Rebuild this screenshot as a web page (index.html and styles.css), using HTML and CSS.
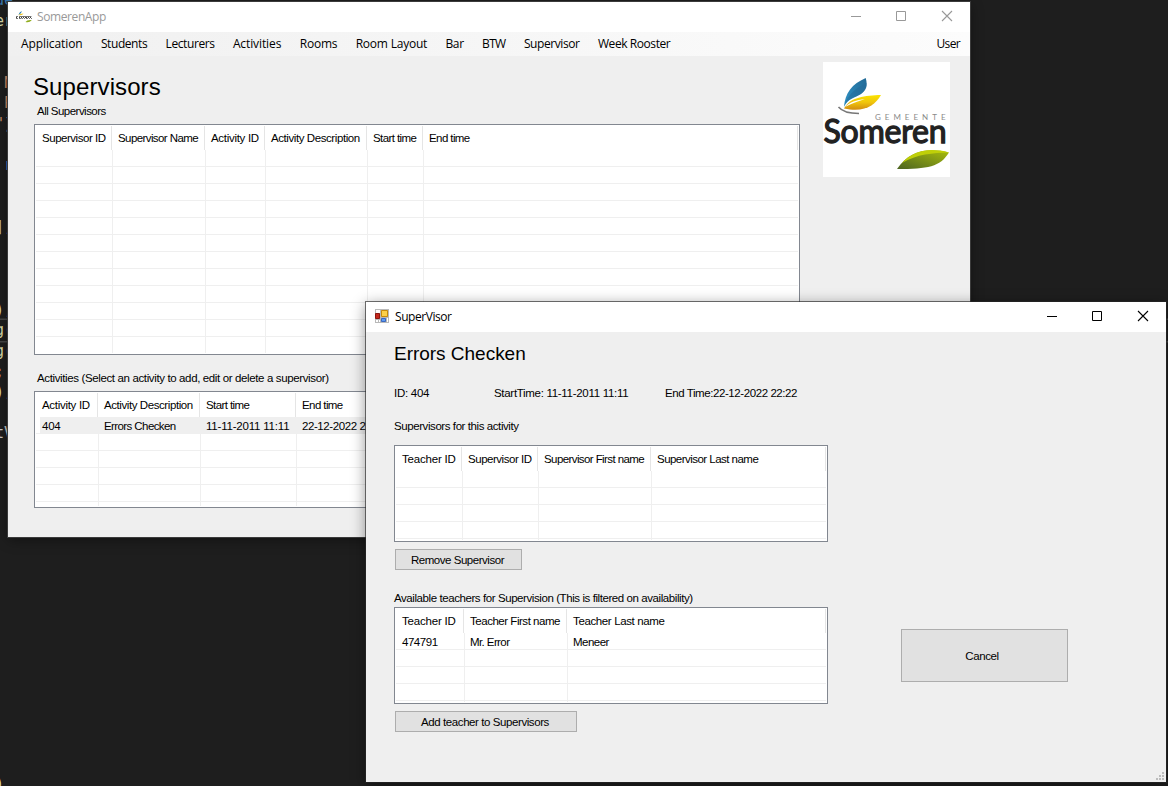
FILE: index.html
```html
<!DOCTYPE html>
<html lang="en">
<head>
<meta charset="utf-8">
<title>SomerenApp</title>
<link rel="stylesheet" href="styles.css">
</head>
<body>
<div class="desktop">
  <div class="code" aria-hidden="true">
    <div class="blue">ue</div><div class="sand">er</div><div></div><div></div>
    <div class="orange">&nbsp;N</div><div class="orange">&nbsp;P</div><div><span class="orange">"</span>)</div><div></div>
    <div class="sky">&nbsp;r</div><div></div><div></div><div>]<span class="sky">;</span></div>
    <div></div><div></div><div></div><div><span class="sand">)</span><span class="sky">;</span></div>
    <div class="current"><span class="sand">g</span><span class="sky">(</span></div><div><span class="sand">g</span><span class="sky">(</span></div>
    <div class="orange">;</div><div><span class="sand">)</span><span class="sky">;</span></div><div></div>
    <div>tV</div><div></div><div></div><div></div><div></div><div></div><div></div><div></div><div></div><div></div><div></div><div></div><div></div><div></div><div></div><div></div><div></div>
    <div class="sand">)</div>
  </div>

  <section class="window main-window">
    <header class="titlebar inactive">
      <svg class="app-icon" width="16" height="16" viewBox="0 0 16 16">
        <path d="M2.500 6Q3 3.500 5.500 2Q6 4 2.500 6Z" fill="#2a82b5"/>
        <path d="M2.500 6Q4 4.500 7.500 4.500Q6 7 2.500 6Z" fill="#efc313"/>
        <path d="M0 7.500h2M3 7.500h12.500M0 9.500h2M3 9.500h2.500M6 9.500h1M8 9.500h1M10 9.500h2M13 9.500h1M15 9.500h1" stroke="#777" stroke-width="1"/>
        <path d="M0 8.500h1M3 8.500h1M5 8.500h1M7 8.500h1M9 8.500h2M12 8.500h1M14 8.500h1" stroke="#444" stroke-width="1"/>
        <path d="M9.500 13Q11 10.500 15.800 11Q13.500 14 9.500 13Z" fill="#8fac1c"/>
      </svg>
      <span class="caption w-somerenapp">SomerenApp</span>
      <div class="controls">
        <svg width="46" height="30"><path d="M19 14.500h10"/></svg>
        <svg width="46" height="30"><path d="M18.500 9.500h9v9h-9z"/></svg>
        <svg width="46" height="30"><path class="cross" d="M18 9l10 10M28 9l-10 10"/></svg>
      </div>
    </header>
    <nav class="menu">
      <span class="k1">Application</span><span class="k4">Students</span><span class="k4">Lecturers</span><span class="k1">Activities</span><span class="k2">Rooms</span><span class="k2">Room Layout</span><span class="k5">Bar</span><span class="k6">BTW</span><span class="k4">Supervisor</span><span class="k4">Week Rooster</span><span class="k6 user">User</span>
    </nav>
    <div class="main-body">
      <div class="main-column">
        <h1>Supervisors</h1>
        <div class="label first-label t50">All Supervisors</div>
        <div class="list all-supervisors">
          <div class="head"><span class="t45">Supervisor ID</span><span class="t55">Supervisor Name</span><span class="t30">Activity ID</span><span class="t40">Activity Description</span><span class="t55">Start time</span><span class="t55">End time</span></div>
          <div class="rows"><i></i><i></i><i></i><i></i><i></i></div>
        </div>
        <div class="label second-label t35">Activities (Select an activity to add, edit or delete a supervisor)</div>
        <div class="list activities">
          <div class="head"><span class="t30">Activity ID</span><span class="t40">Activity Description</span><span class="t55">Start time</span><span class="t55">End time</span></div>
          <div class="rows"><i></i><i></i><i></i>
            <div class="item selected"><span class="t25">404</span><span class="t55">Errors Checken</span><span class="t15">11-11-2011 11:11</span><span class="t40">22-12-2022 22:22</span></div>
          </div>
        </div>
      </div>
      <svg class="logo" width="127" height="115" viewBox="0 0 127 115">
        <defs>
          <linearGradient id="blue" x1="0" y1="1" x2="1" y2="0"><stop offset="0" stop-color="#3095c8"/><stop offset="1" stop-color="#226995"/></linearGradient>
          <linearGradient id="yellow" x1="0" y1="0" x2="0" y2="1"><stop offset="0" stop-color="#fbe400"/><stop offset=".5" stop-color="#f0c40c"/><stop offset="1" stop-color="#d18b10"/></linearGradient>
          <linearGradient id="green" x1="0" y1="1" x2="1" y2="0"><stop offset="0" stop-color="#4c6422"/><stop offset="1" stop-color="#a9bd0b"/></linearGradient>
        </defs>
        <path d="M21 45C22 31 29 22 42.700 16C45 24 43 28 38 32C32 36 25 36 21 45Z" fill="url(#blue)"/>
        <path d="M21 44C25 32 33 26 43.500 21C44.500 27 40 31 36 33C30 36 25 37 21 44Z" fill="#246a98" opacity=".55"/>
        <path d="M21 46.500C27 35 42 33.500 58 33C52 43 42 51 21 46.500Z" fill="url(#yellow)"/>
        <path d="M22 45C27 40 33 38 42 37C35 39.500 29 41 22 45Z" fill="#fff"/>
        <path d="M15.500 45C20 50.500 28 51.500 36 51.500" fill="none" stroke="#777" stroke-width="1.500"/>
        <text x="52" y="57.700" textLength="70.500" class="logo-small">GEMEENTE</text>
        <text x="0.500" y="80.500" textLength="123" class="logo-name">Someren</text>
        <path d="M74 107C86 89 104 85 126 90.500C117 105 105 107 74 107Z" fill="url(#green)"/>
        <path d="M79 101C91 88 107 85.500 126 90.500C110 91 94 92 79 101Z" fill="#bfcf08"/>
      </svg>
    </div>
  </section>

  <section class="window dialog">
    <header class="titlebar">
      <svg class="form-icon" width="14" height="14" viewBox="0 0 14 14">
        <path d="M0 0h14v14H0z" fill="#b9b9b9"/>
        <path d="M1 1h4v3H1zM1 11h2v2H1zM4 11h1v2H4zM12 9h1v4h-1z" fill="#fff"/>
        <path d="M.5 4.500h4v5h-4z" fill="#c5281c" stroke="#8e1710"/>
        <path d="M6.500 1.500h6v6h-6z" fill="#fbd04a" stroke="#c78a09"/>
        <path d="M6.500 9.500h4v3h-4z" fill="#5b9af5" stroke="#3a68c0"/>
      </svg>
      <span class="caption w-supervisor">SuperVisor</span>
      <div class="controls">
        <svg width="46" height="30"><path d="M19 14.500h10"/></svg>
        <svg width="46" height="30"><path d="M18.500 9.500h9v9h-9z"/></svg>
        <svg width="46" height="30"><path class="cross" d="M18 9l10 10M28 9l-10 10"/></svg>
      </div>
    </header>
    <div class="dialog-body">
      <div class="dialog-column">
        <h2>Errors Checken</h2>
        <div class="info"><span class="t25">ID: 404</span><span class="t30">StartTime: 11-11-2011 11:11</span><span class="t40">End Time:22-12-2022 22:22</span></div>
        <div class="assigned-label t40">Supervisors for this activity</div>
        <div class="list assigned">
          <div class="head"><span class="t15">Teacher ID</span><span class="t45">Supervisor ID</span><span class="t55">Supervisor First name</span><span class="t50">Supervisor Last name</span></div>
          <div class="rows"><i></i><i></i><i></i></div>
        </div>
        <button class="remove t45">Remove Supervisor</button>
        <div class="available-label t40">Available teachers for Supervision (This is filtered on availability)</div>
        <div class="list available">
          <div class="head"><span class="t15">Teacher ID</span><span class="t45">Teacher First name</span><span class="t35">Teacher Last name</span></div>
          <div class="rows"><i></i><i></i>
            <div class="item"><span class="t45">474791</span><span class="t55">Mr. Error</span><span class="t50">Meneer</span></div>
          </div>
        </div>
        <button class="add t40">Add teacher to Supervisors</button>
      </div>
      <button class="cancel t40">Cancel</button>
    </div>
    <svg class="grip" width="8" height="8" fill="#bcbcbc"><path d="M6 0h2v2H6zM3 3h2v2H3zM6 3h2v2H6zM0 6h2v2H0zM3 6h2v2H3zM6 6h2v2H6z"/></svg>
  </section>
</div>
</body>
</html>
```
FILE: styles.css
```css
* { box-sizing: border-box; }
body { margin: 0; }
.desktop {
  position: relative;
  width: 1168px;
  height: 786px;
  overflow: hidden;
  background: #1e1e1e;
  color: #000;
  font: 11.5px/14px "Liberation Sans", Arial, sans-serif;
  white-space: nowrap;
}

/* editor behind the windows */
.code {
  margin-top: -10px;
  color: #c8c8c8;
  font: 15px/20.65px "DejaVu Sans Mono", monospace;
  text-indent: -5px;
}
.code div { height: 20.65px; }
.code .current { box-shadow: 0 0 0 1.5px #464646; }
.blue { color: #3a76ad; }
.sand { color: #d7d7a8; }
.orange { color: #c98766; }
.sky { color: #7fb4dc; }

.window {
  position: absolute;
  display: flex;
  flex-direction: column;
  background: #efefef;
}
.main-window {
  left: 8px;
  top: 2px;
  width: 962px;
  height: 535px;
  box-shadow: 0 0 0 1px #3b3b3b, 0 3px 12px rgba(0, 0, 0, .4);
}
.dialog {
  left: 366px;
  top: 302px;
  width: 800px;
  height: 480px;
  box-shadow: 0 0 0 1px rgba(40, 40, 40, .65), 0 3px 14px rgba(0, 0, 0, .45);
}

.titlebar {
  display: flex;
  align-items: center;
  height: 30px;
  background: #fff;
  font: 12px/16px "Open Sans", "Noto Sans", sans-serif;
}
.inactive { color: #999; }
.app-icon { margin: 0 5px 0 8px; }
.form-icon { margin: 0 6px 3px 9px; }
.w-somerenapp { letter-spacing: -.4px; }
.w-supervisor { letter-spacing: -.45px; }
.controls {
  display: flex;
  margin-left: auto;
  fill: none;
  stroke: #000;
}
.inactive .controls { stroke: #999; }
.cross { stroke-width: 1.1; }

.menu {
  display: flex;
  gap: 18.4px;
  height: 24px;
  padding: 0 10px 0 13px;
  background: linear-gradient(90deg, #f0f0f0, #fcfcfc);
  font: 12px/24px "Open Sans", "Noto Sans", sans-serif;
}
.user { margin-left: auto; }
.k1 { letter-spacing: -.1px; }
.k2 { letter-spacing: -.22px; }
.k4 { letter-spacing: -.42px; }
.k5 { letter-spacing: -.4px; }
.k6 { letter-spacing: -.65px; }

.main-body {
  display: flex;
  padding-left: 26px;
}
.main-column { width: 766px; padding-top: 17px; }
h1 {
  margin: 0 0 3px -1px;
  font-size: 24px;
  font-weight: 400;
  line-height: 28px;
  letter-spacing: .1px;
}
.label { padding-left: 3px; margin-bottom: 6px; }
.second-label { margin-top: 16px; }
.logo { margin: 6px 0 0 23px; background: #fff; }
.logo-small { font: 8px Lato, sans-serif; fill: #8a8a8a; }
.logo-name {
  font: 400 32px Lato, sans-serif;
  fill: #222;
  stroke: #222;
  stroke-width: 1.3px;
}

/* report list with grid lines */
.list {
  display: flex;
  flex-direction: column;
  padding: 1px;
  border: 1px solid #828790;
  background: #fff;
}
.head {
  display: grid;
  grid-template-columns: var(--cols);
  height: 24px;
}
.head span {
  padding: 5px 0 0 6px;
  border-right: 1px solid #e5e5e5;
}
.rows {
  position: relative;
  flex: 1;
  display: grid;
  grid-template-columns: var(--cols);
  padding-left: 1px;
  background: repeating-linear-gradient(#fff 0 16px, #efefef 16px 17px);
}
.rows i { border-right: 1px solid #efefef; }
.item {
  position: absolute;
  inset: 0 0 auto 4px;
  display: grid;
  grid-template-columns: var(--cols);
  height: 16px;
}
.item span { padding: 2px 0 0 2px; }
.selected { height: 17px; background: #efefef; }
.all-supervisors { --cols: 76px 93px 60px 102px 56px 1fr; height: 231px; }
.activities { --cols: 62px 102px 96px 1fr; height: 117px; }
.assigned { --cols: 66px 76px 113px 1fr; height: 97px; }
.available { --cols: 68px 103px 1fr; height: 97px; }

.dialog-body { display: flex; padding: 11px 0 0 28px; }
.dialog-column { width: 434px; }
h2 {
  margin: 0 0 21px;
  font-size: 19px;
  font-weight: 400;
  line-height: 22px;
  letter-spacing: -.02px;
}
.info {
  display: grid;
  grid-template-columns: 100px 171px 1fr;
  margin-bottom: 19px;
}
.assigned-label { margin-bottom: 12px; }
.available-label { margin: 21px 0 2px; }
button {
  display: block;
  padding: 0 2px 0 0;
  border: 1px solid #adadad;
  border-radius: 0;
  background: #e1e1e1;
  color: #000;
  font: inherit;
}
.remove { width: 127px; height: 21px; margin: 7px 0 0 1px; }
.add { width: 182px; height: 21px; margin: 7px 0 0 1px; }
.cancel { width: 167px; height: 53px; margin: 286px 0 0 73px; padding-right: 5px; }
.grip { position: absolute; right: 2px; bottom: 2px; }

/* per-string tracking */
.t15 { letter-spacing: -.2px; }
.t25 { letter-spacing: -.27px; }
.t30 { letter-spacing: -.3px; }
.t35 { letter-spacing: -.37px; }
.t40 { letter-spacing: -.42px; }
.t45 { letter-spacing: -.47px; }
.t50 { letter-spacing: -.53px; }
.t55 { letter-spacing: -.59px; }
```
